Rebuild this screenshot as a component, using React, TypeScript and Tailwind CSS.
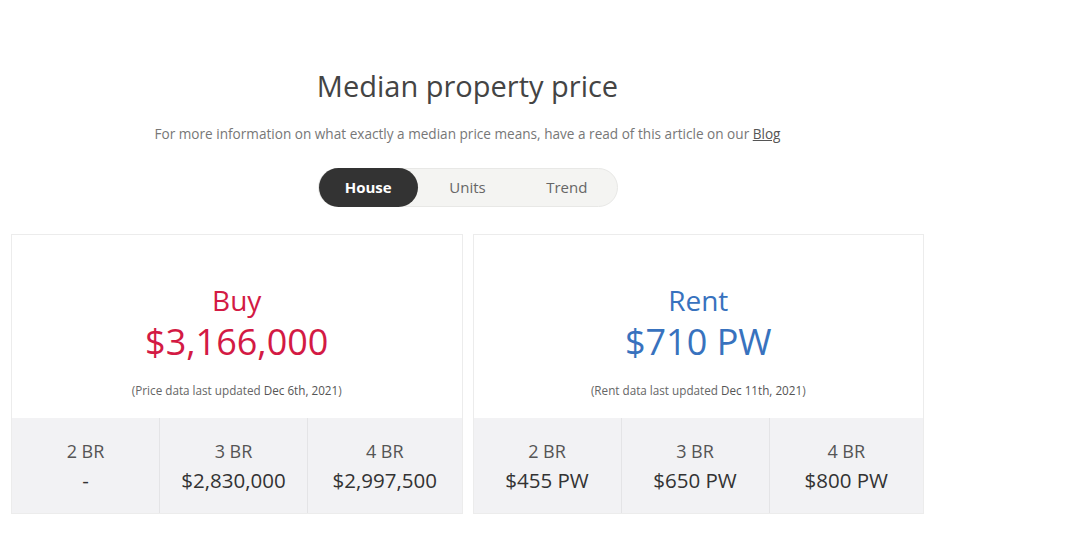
const font = { fontFamily: '"Open Sans", Lato, sans-serif' };

type Row = { label: string; value: string };

const buy: Row[] = [
  { label: '2 BR', value: '-' },
  { label: '3 BR', value: '$2,830,000' },
  { label: '4 BR', value: '$2,997,500' },
];

const rent: Row[] = [
  { label: '2 BR', value: '$455 PW' },
  { label: '3 BR', value: '$650 PW' },
  { label: '4 BR', value: '$800 PW' },
];

function PriceCard({
  title,
  price,
  note,
  date,
  color,
  rows,
}: {
  title: string;
  price: string;
  note: string;
  date: string;
  color: string;
  rows: Row[];
}) {
  return (
    <div className="border border-[#ececec] bg-white">
      <div className="flex h-[183px] flex-col items-center pt-[48px]">
        <div className={`text-[28px] leading-[34px] ${color}`}>{title}</div>
        <div className={`mt-[2px] text-[36px] leading-[46px] ${color}`}>{price}</div>
        <div className="mt-[16px] text-[11.7px] leading-[18px] text-[#666]">
          ({note} <span className="text-[#555]">{date}</span>)
        </div>
      </div>
      <div className="grid h-[95px] grid-cols-[147px_148px_1fr] bg-[#f2f2f4]">
        {rows.map((r, i) => (
          <div
            key={r.label}
            className={`flex flex-col items-center pt-[21px] ${i > 0 ? 'border-l border-[#e4e4e6]' : ''}`}
          >
            <div className="text-[18px] leading-[24px] text-[#555]">{r.label}</div>
            <div className="mt-[5px] text-[20.5px] leading-[24px] text-[#333]">{r.value}</div>
          </div>
        ))}
      </div>
    </div>
  );
}

export default function App() {
  return (
    <div className="h-[538px] w-[1080px] bg-white" style={font}>
      <div className="w-[935px] px-[11px] pt-[66px]">
        <h2 className="text-center text-[29px] font-medium leading-[40px] text-[#444]">Median property price</h2>
        <p className="mt-[18px] text-center text-[13.6px] leading-[20px] text-[#777]">
          For more information on what exactly a median price means, have a read of this article on our{' '}
          <span className="text-[#555] underline">Blog</span>
        </p>
        <div className="mt-[24px] flex justify-center">
          <div className="flex h-[39px] w-[300px] items-center rounded-full border border-[#e8e8e6] bg-[#f4f4f2] text-[15px]">
            <div className="flex h-[39px] w-[100px] items-center justify-center rounded-full bg-[#333] font-bold text-white">
              House
            </div>
            <div className="flex w-[100px] justify-center text-[#666]">Units</div>
            <div className="flex w-[100px] justify-center text-[#666]">Trend</div>
          </div>
        </div>
        <div className="mt-[27px] grid grid-cols-2 gap-[10px]">
          <PriceCard
            title="Buy"
            price="$3,166,000"
            note="Price data last updated"
            date="Dec 6th, 2021"
            color="text-[#d31a44]"
            rows={buy}
          />
          <PriceCard
            title="Rent"
            price="$710 PW"
            note="Rent data last updated"
            date="Dec 11th, 2021"
            color="text-[#3872be]"
            rows={rent}
          />
        </div>
      </div>
    </div>
  );
}
